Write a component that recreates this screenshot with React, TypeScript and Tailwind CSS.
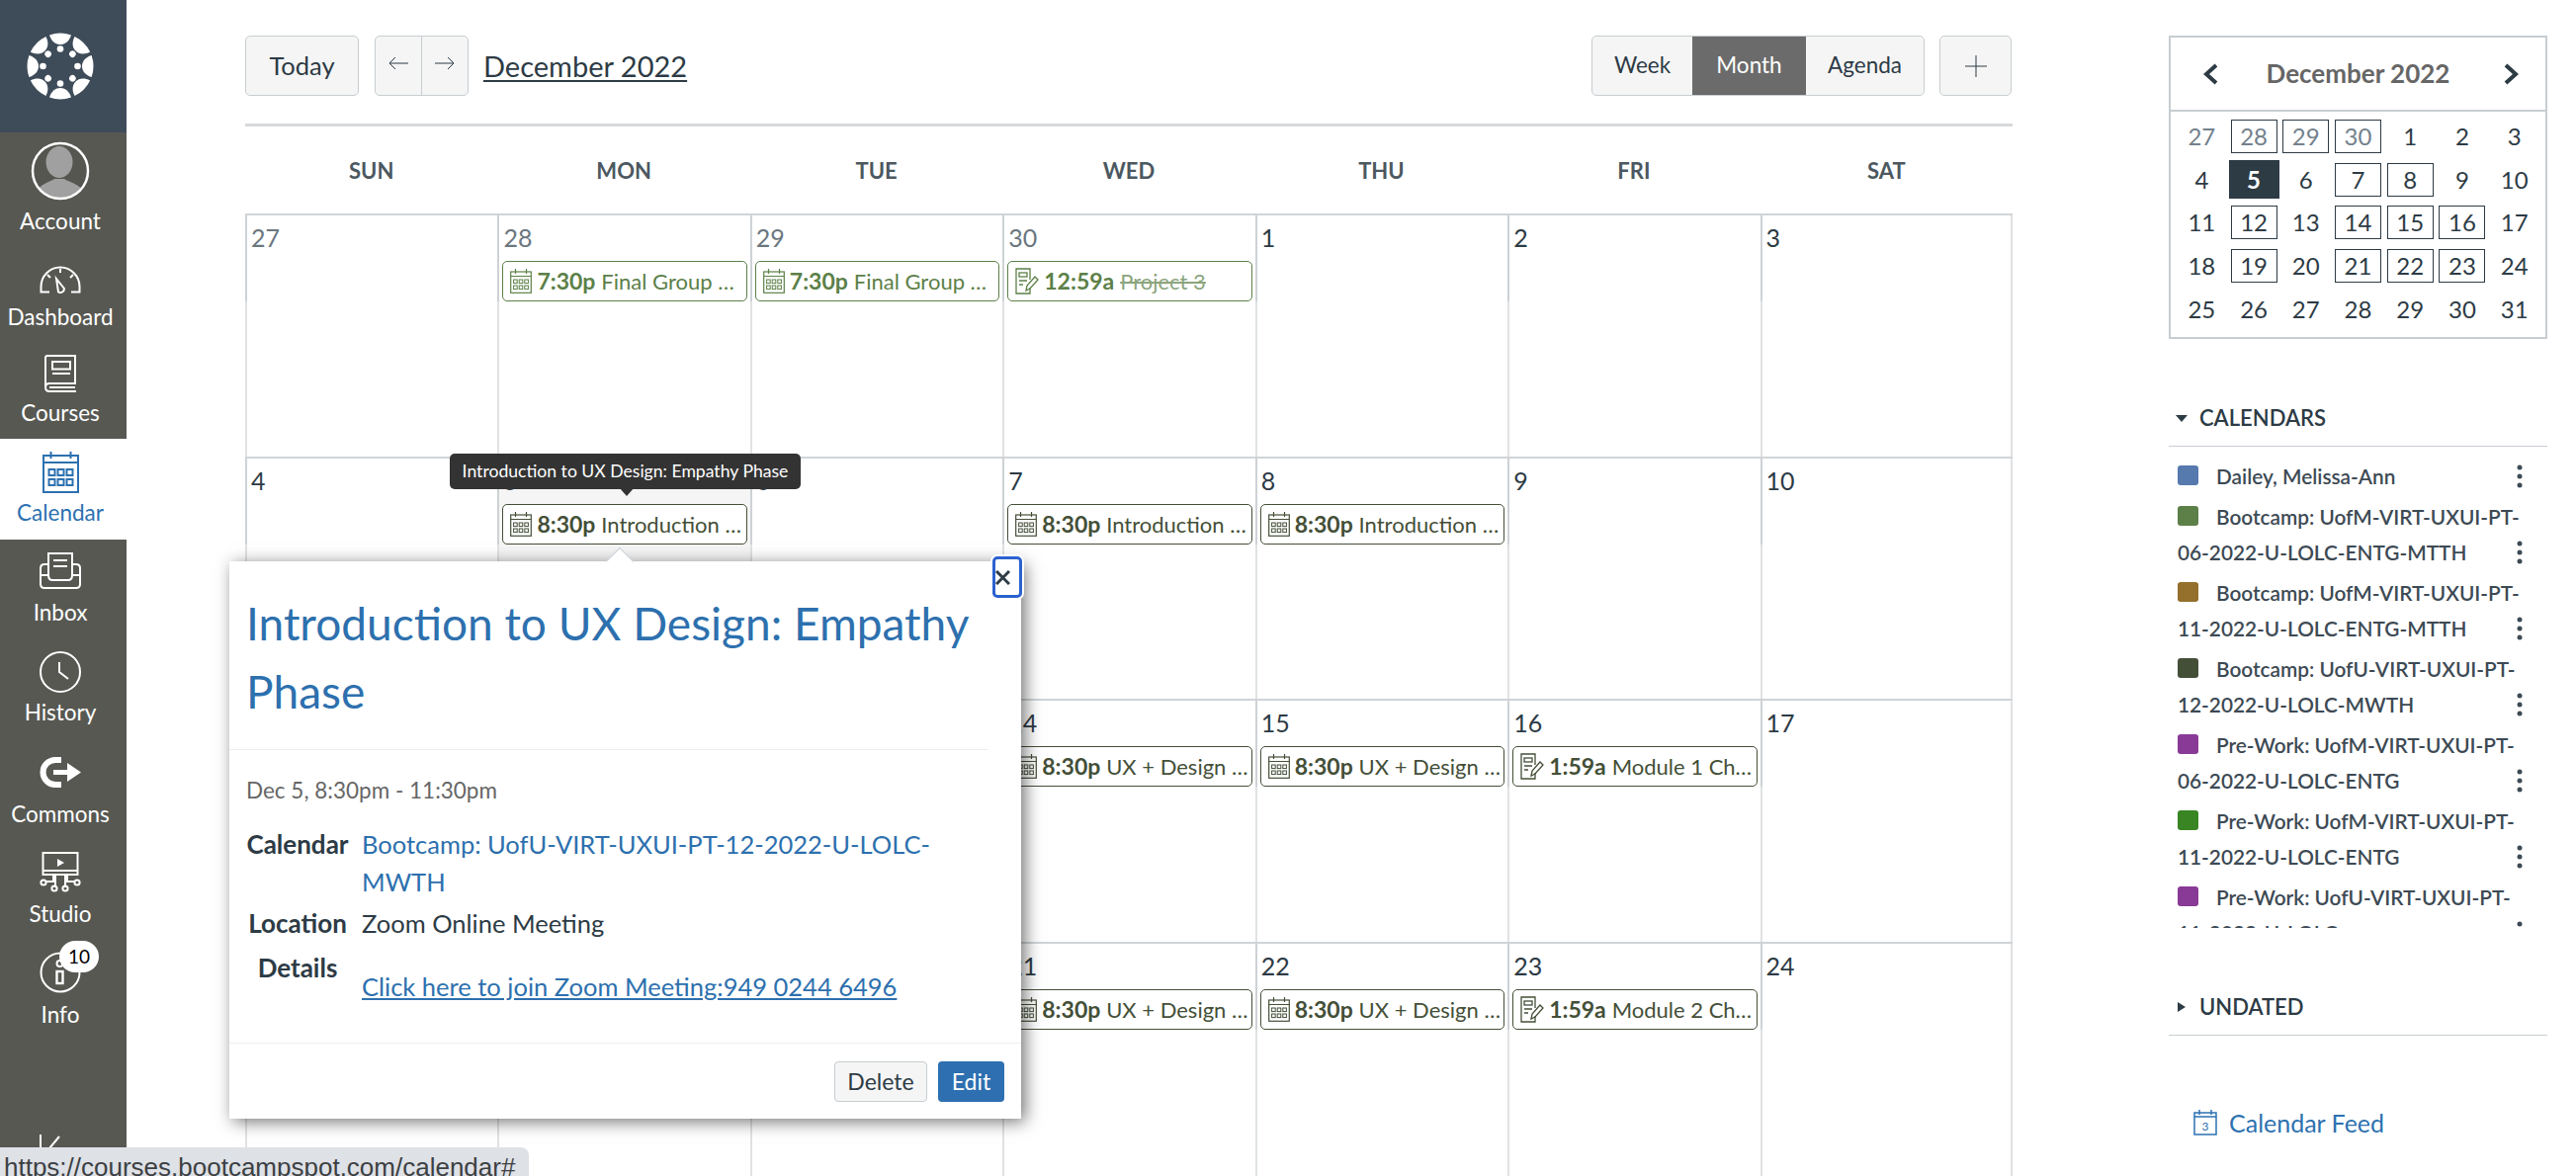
const items = [
  { label: 'Dashboard', h: 'h-[97px]', pb: 'pb-[13px]', mb: 'mb-[11px]', icon: <GaugeIcon /> },
  { label: 'Courses', h: 'h-[97px]', pb: 'pb-[13px]', mb: 'mb-[8px]', icon: <BookIcon /> },
  { label: 'Calendar', h: 'h-[102px]', pb: 'pb-[14px]', mb: 'mb-[7px]', icon: <CalendarNavIcon />, active: true },
  { label: 'Inbox', h: 'h-[101px]', pb: 'pb-[14px]', mb: 'mb-[11px]', icon: <InboxIcon /> },
  { label: 'History', h: 'h-[102px]', pb: 'pb-[15px]', mb: 'mb-[7px]', icon: <ClockIcon /> },
  { label: 'Commons', h: 'h-[102px]', pb: 'pb-[14px]', mb: 'mb-[14px]', icon: <CommonsIcon /> },
  { label: 'Studio', h: 'h-[101px]', pb: 'pb-[14px]', mb: 'mb-[9px]', icon: <StudioIcon /> },
  { label: 'Info', h: 'h-[102px]', pb: 'pb-[14px]', mb: 'mb-[9px]', icon: <InfoIcon /> },
];

type Ev = { time: string; title: string; tone: 'green' | 'dark'; kind?: 'cal' | 'task'; done?: boolean };

const finalGroup: Ev = { time: '7:30p', title: 'Final Group …', tone: 'green' };
const intro: Ev = { time: '8:30p', title: 'Introduction …', tone: 'dark' };
const uxDesign: Ev = { time: '8:30p', title: 'UX + Design …', tone: 'dark' };

const weeks: { day: number; muted?: boolean; today?: boolean; events?: Ev[] }[][] = [
  [
    { day: 27, muted: true },
    { day: 28, muted: true, events: [finalGroup] },
    { day: 29, muted: true, events: [finalGroup] },
    { day: 30, muted: true, events: [{ time: '12:59a', title: 'Project 3', tone: 'green', kind: 'task', done: true }] },
    { day: 1 },
    { day: 2 },
    { day: 3 },
  ],
  [
    { day: 4 },
    { day: 5, today: true, events: [intro] },
    { day: 6 },
    { day: 7, events: [intro] },
    { day: 8, events: [intro] },
    { day: 9 },
    { day: 10 },
  ],
  [
    { day: 11 },
    { day: 12 },
    { day: 13 },
    { day: 14, events: [uxDesign] },
    { day: 15, events: [uxDesign] },
    { day: 16, events: [{ time: '1:59a', title: 'Module 1 Ch…', tone: 'dark', kind: 'task' }] },
    { day: 17 },
  ],
  [
    { day: 18 },
    { day: 19 },
    { day: 20 },
    { day: 21, events: [uxDesign] },
    { day: 22, events: [uxDesign] },
    { day: 23, events: [{ time: '1:59a', title: 'Module 2 Ch…', tone: 'dark', kind: 'task' }] },
    { day: 24 },
  ],
];

const miniDays = [
  [27, 28, 29, 30, 1, 2, 3],
  [4, 5, 6, 7, 8, 9, 10],
  [11, 12, 13, 14, 15, 16, 17],
  [18, 19, 20, 21, 22, 23, 24],
  [25, 26, 27, 28, 29, 30, 31],
];
const boxed = ['0-1', '0-2', '0-3', '1-3', '1-4', '2-1', '2-3', '2-4', '2-5', '3-1', '3-3', '3-4', '3-5'];

const calendars = [
  { name: 'Dailey, Melissa-Ann', color: 'bg-[#5679ae]' },
  { name: 'Bootcamp: UofM-VIRT-UXUI-PT-06-2022-U-LOLC-ENTG-MTTH', color: 'bg-[#5c8048]' },
  { name: 'Bootcamp: UofM-VIRT-UXUI-PT-11-2022-U-LOLC-ENTG-MTTH', color: 'bg-[#94702c]' },
  { name: 'Bootcamp: UofU-VIRT-UXUI-PT-12-2022-U-LOLC-MWTH', color: 'bg-[#444f38]' },
  { name: 'Pre-Work: UofM-VIRT-UXUI-PT-06-2022-U-LOLC-ENTG', color: 'bg-[#893a96]' },
  { name: 'Pre-Work: UofM-VIRT-UXUI-PT-11-2022-U-LOLC-ENTG', color: 'bg-[#398524]' },
  { name: 'Pre-Work: UofU-VIRT-UXUI-PT-11-2022-U-LOLC', color: 'bg-[#893a96]' },
];

function CanvasLogo() {
  const angles = [0, 45, 90, 135, 180, 225, 270, 315];
  return (
    <svg width="70" height="70" viewBox="-35 -35 70 70" fill="white">
      {angles.map((a) => (
        <g key={a} transform={`rotate(${a})`}>
          <path d="M-11 -31.6 A33.5 33.5 0 0 1 11 -31.6 C9 -25 4.5 -22 0 -22 C-4.5 -22 -9 -25 -11 -31.6 Z" />
          <circle cx="0" cy="-17.5" r="3.3" />
        </g>
      ))}
    </svg>
  );
}

function AvatarIcon() {
  return (
    <svg width="60" height="60" viewBox="0 0 60 60" className="mb-[8px]">
      <defs>
        <clipPath id="avatar-clip">
          <circle cx="30" cy="30" r="27.5" />
        </clipPath>
      </defs>
      <circle cx="30" cy="30" r="28" fill="#55564f" />
      <g clipPath="url(#avatar-clip)" fill="#a0a0a0">
        <ellipse cx="29" cy="21" rx="13.5" ry="16" />
        <path d="M4 60 C4 44 18 42 24 38 H34 C40 42 56 44 56 60 Z" />
      </g>
      <circle cx="30" cy="30" r="28" fill="none" stroke="white" strokeWidth="2.5" />
    </svg>
  );
}

function GaugeIcon() {
  return (
    <svg width="42" height="28" viewBox="0 0 42 28" fill="none" stroke="currentColor" strokeWidth="2">
      <path d="M10 26.5 H1.5 V21 A19.5 19.5 0 0 1 40.5 21 V26.5 H32" />
      <path d="M21 3 V7 M8 9 L11 12 M34 9 L31 12" />
      <path d="M17 13 L25 23 A4 4 0 0 1 19 26.5 Z" />
    </svg>
  );
}

function BookIcon() {
  return (
    <svg width="33" height="38" viewBox="0 0 33 38" fill="none" stroke="currentColor" strokeWidth="2">
      <path d="M1 32 V3 Q1 1 3 1 H31 V29 H5 Q1 29 1 33 Q1 37 5 37 H32" />
      <path d="M5 33 H31" />
      <rect x="8" y="7" width="18" height="7.5" />
      <path d="M8 19 H26" />
    </svg>
  );
}

function CalendarNavIcon() {
  const cells = [
    [6.5, 18], [15.5, 18], [24.5, 18],
    [6.5, 28], [15.5, 28], [24.5, 28],
  ];
  return (
    <svg width="37" height="42" viewBox="0 0 37 42" fill="none" stroke="currentColor" strokeWidth="2">
      <rect x="1" y="4" width="35" height="37" />
      <path d="M1 11 H36 M8.5 0 V7 M28.5 0 V7" />
      {cells.map(([x, y]) => (
        <rect key={`${x}-${y}`} x={x} y={y} width="6" height="6" strokeWidth="2" />
      ))}
    </svg>
  );
}

function InboxIcon() {
  return (
    <svg width="42" height="37" viewBox="0 0 42 37" fill="none" stroke="currentColor" strokeWidth="2">
      <path d="M9 22 V1 H33 V22" />
      <path d="M14 8 H28 M14 14 H28" />
      <path d="M9 12 H5 Q1 12 1 16 V32 Q1 36 5 36 H37 Q41 36 41 32 V16 Q41 12 37 12 H33" />
      <path d="M1 23 H9 Q9 28 13 28 H29 Q33 28 33 23 H41" />
    </svg>
  );
}

function ClockIcon() {
  return (
    <svg width="42" height="42" viewBox="0 0 42 42" fill="none" stroke="currentColor" strokeWidth="2">
      <circle cx="21" cy="21" r="20" />
      <path d="M20 11 V21 L29 28" />
    </svg>
  );
}

function CommonsIcon() {
  return (
    <svg width="42" height="31" viewBox="0 0 42 31" fill="currentColor">
      <path d="M22 3 H16 A12.5 12.5 0 0 0 16 28 H22" fill="none" stroke="currentColor" strokeWidth="6" />
      <path d="M14 13 H28 V6 L42 15.5 L28 25 V18 H14 Z" />
    </svg>
  );
}

function StudioIcon() {
  return (
    <svg width="42" height="41" viewBox="0 0 42 41" fill="none" stroke="currentColor" strokeWidth="2">
      <rect x="3.5" y="1" width="35" height="22" />
      <path d="M3.5 19 H38.5" />
      <path d="M18 7 L25 11 L18 15 Z" fill="currentColor" stroke="none" />
      <path d="M14 23 V30 H7 M16 23 V36 M26 23 V36 M28 23 V30 H35" />
      <circle cx="4" cy="31" r="2.6" />
      <circle cx="15" cy="37" r="2.6" />
      <circle cx="26" cy="37" r="2.6" />
      <circle cx="38" cy="31" r="2.6" />
    </svg>
  );
}

function InfoIcon() {
  return (
    <svg width="42" height="42" viewBox="0 0 42 42" fill="none" stroke="currentColor" strokeWidth="2">
      <circle cx="21" cy="21" r="19.5" />
      <rect x="17.5" y="20" width="6" height="12" strokeWidth="2.4" />
      <circle cx="20.5" cy="12" r="3" />
    </svg>
  );
}

function EventCalIcon() {
  const cells = [
    [3.6, 11], [9.2, 11], [14.8, 11],
    [3.6, 17], [9.2, 17], [14.8, 17],
  ];
  return (
    <svg width="22" height="25" viewBox="0 0 22 25" fill="none" stroke="currentColor" strokeWidth="1.2" className="shrink-0">
      <rect x="0.7" y="3" width="20.6" height="21.3" />
      <path d="M0.7 7.5 H21.3 M5.5 0 V5 M16.5 0 V5" />
      {cells.map(([x, y]) => (
        <rect key={`${x}-${y}`} x={x} y={y} width="3.6" height="3.6" strokeWidth="1" />
      ))}
    </svg>
  );
}

function EventTaskIcon() {
  return (
    <svg width="24" height="27" viewBox="0 0 24 27" fill="none" stroke="currentColor" strokeWidth="1.3" className="shrink-0">
      <path d="M15 20 V26 H1 V1 H15 V12" />
      <rect x="4" y="5" width="8" height="4" />
      <path d="M4 13 H12 M4 17 H8" />
      <path d="M11 23 L12 18 L20 9 L23 12 L15 21 Z" />
    </svg>
  );
}

function EventChip({ ev }: { ev: Ev }) {
  const tone = ev.tone === 'green' ? 'border-[#5c8048] text-[#5c8048]' : 'border-[#444f38] text-[#444f38]';
  return (
    <div className={`mx-[3px] h-[41px] rounded-[5px] border bg-white pl-[7px] flex items-center gap-[5px] overflow-hidden whitespace-nowrap text-[23px] ${tone}`}>
      {ev.kind === 'task' ? <EventTaskIcon /> : <EventCalIcon />}
      <span>
        <span className="font-bold">{ev.time}</span>{' '}
        <span className={`text-[22px] ${ev.done ? 'line-through opacity-70' : ''}`}>{ev.title}</span>
      </span>
    </div>
  );
}

function SidePanelHeader({ open, label }: { open?: boolean; label: string }) {
  return (
    <div className="h-[52px] pb-[6px] pl-[7px] flex items-center border-b border-[#c7cdd1] text-[22px] font-semibold text-[#2d3b45]">
      <svg width="12" height="12" viewBox="0 0 12 12" fill="currentColor" className="mr-[12px]">
        {open ? <path d="M0 3 H12 L6 10 Z" /> : <path d="M2 1 V11 L10 6 Z" />}
      </svg>
      {label}
    </div>
  );
}

export default function App() {
  return (
    <div className="relative flex h-[1190px] w-[2606px] overflow-hidden bg-white font-[family-name:Lato,sans-serif] text-[#2d3b45]">
      {/* Global nav */}
      <nav className="w-[128px] shrink-0 bg-[#575852] text-white text-[22.5px] flex flex-col">
        <div className="h-[134px] shrink-0 bg-[#3e4b59] pr-[6px] flex items-center justify-center">
          <CanvasLogo />
        </div>
        <div className="h-[116px] shrink-0 pr-[6px] flex flex-col items-center justify-end pb-[13px] leading-[26px]">
          <AvatarIcon />
          <span>Account</span>
        </div>
        {items.map((it) => (
          <div
            key={it.label}
            className={`${it.h} ${it.pb} shrink-0 pr-[6px] flex flex-col items-center justify-end leading-[26px] ${it.active ? 'bg-white text-[#2d71b0]' : ''}`}
          >
            <div className={`relative ${it.mb}`}>
              {it.icon}
              {it.label === 'Info' && (
                <span className="absolute left-[20px] -top-[11px] h-[32px] w-[40px] rounded-full bg-white text-black text-[19px] flex items-center justify-center">
                  10
                </span>
              )}
            </div>
            <span>{it.label}</span>
          </div>
        ))}
        <div className="pt-[94px] pl-[40px]">
          <svg width="40" height="42" viewBox="0 0 40 42" fill="none" stroke="currentColor" strokeWidth="2">
            <path d="M1 0 V42 M20 2 L5 20 L20 38 M5 20 H40" />
          </svg>
        </div>
      </nav>

      {/* Calendar */}
      <main className="ml-[120px] w-[1788px] shrink-0">
        <div className="h-[125px] pt-[36px] flex items-start">
          <button className="h-[61px] w-[115px] rounded-[5px] border border-[#c7cdd1] bg-[#f5f5f5] text-[25.5px]">Today</button>
          <div className="ml-[16px] h-[61px] w-[95px] rounded-[5px] border border-[#c7cdd1] bg-[#f5f5f5] flex">
            <div className="flex-1 flex items-center justify-center pb-[6px] border-r border-[#c7cdd1]">
              <svg width="20" height="14" viewBox="0 0 20 14" fill="none" stroke="#2d3b45" strokeWidth="1"><path d="M20 7 H1 M7 1 L1 7 L7 13" /></svg>
            </div>
            <div className="flex-1 flex items-center justify-center pb-[6px]">
              <svg width="20" height="14" viewBox="0 0 20 14" fill="none" stroke="#2d3b45" strokeWidth="1"><path d="M0 7 H19 M13 1 L19 7 L13 13" /></svg>
            </div>
          </div>
          <a className="ml-[15px] h-[61px] flex items-center text-[29px] underline underline-offset-[3px]">December 2022</a>
          <div className="ml-auto h-[61px] w-[337px] rounded-[5px] border border-[#c7cdd1] bg-[#f5f5f5] flex text-[22.5px] overflow-hidden">
            <div className="w-[101px] flex items-center justify-center pb-[2px]">Week</div>
            <div className="w-[115px] bg-[#6b6b6b] text-white flex items-center justify-center pb-[2px]">Month</div>
            <div className="flex-1 flex items-center justify-center pb-[2px]">Agenda</div>
          </div>
          <div className="ml-[15px] mr-[1px] h-[61px] w-[73px] rounded-[5px] border border-[#c7cdd1] bg-[#f5f5f5] flex items-center justify-center">
            <svg width="22" height="22" viewBox="0 0 22 22" stroke="#2d3b45" strokeWidth="1"><path d="M11 0 V22 M0 11 H22" /></svg>
          </div>
        </div>
        <div className="h-[3px] bg-[#d7d9da]" />
        <div className="h-[88px] grid grid-cols-7 items-center text-center text-[22px] font-bold text-[#4c5860]">
          {['SUN', 'MON', 'TUE', 'WED', 'THU', 'FRI', 'SAT'].map((d) => (
            <div key={d}>{d}</div>
          ))}
        </div>
        {weeks.map((week, i) => (
          <div key={i} className="grid grid-cols-7 h-[245.5px] border-t-2 border-[#d0d4d7]">
            {week.map((cell, j) => (
              <div
                key={cell.day}
                className={`border-l-2 border-[#e0e2e3] ${j === 6 ? 'border-r-2' : ''} ${cell.today ? 'bg-[#f5f5f5]' : ''}`}
              >
                <div className="h-[87px] -ml-[2px] border-l-2 border-[#cdd2d5]">
                  <div className={`h-[46px] pl-[4px] flex items-center text-[25px] ${cell.muted ? 'text-[#6b7780]' : ''}`}>
                    {cell.day}
                  </div>
                  {cell.events?.map((ev, k) => <EventChip key={k} ev={ev} />)}
                </div>
              </div>
            ))}
          </div>
        ))}
      </main>

      {/* Right sidebar */}
      <aside className="ml-[158px] w-[383px] shrink-0 pt-[36px]">
        <div className="h-[307px] border-2 border-[#c7cdd1]">
          <div className="h-[75px] border-b-2 border-[#c7cdd1] flex items-center justify-between pl-[32px] pr-[26px]">
            <svg width="16" height="22" viewBox="0 0 16 22" fill="none" stroke="#2d3b45" strokeWidth="4"><path d="M14 2 L4 11 L14 20" /></svg>
            <span className="mr-[6px] text-[26px] font-bold text-[#666]">December 2022</span>
            <svg width="16" height="22" viewBox="0 0 16 22" fill="none" stroke="#2d3b45" strokeWidth="4"><path d="M2 2 L12 11 L2 20" /></svg>
          </div>
          <div className="px-[5px] pt-[3px] grid grid-cols-7 text-[24px]">
            {miniDays.map((row, r) =>
              row.map((d, c) => {
                const key = `${r}-${c}`;
                const isToday = key === '1-1';
                const isMuted = r === 0 && c < 4;
                return (
                  <div key={key} className="h-[43.7px] flex items-center justify-center">
                    <span
                      className={`flex items-center justify-center ${isToday ? 'h-[39px] w-[51px] bg-[#2d3b45] text-white font-bold' : 'h-[34px] w-[47px]'} ${boxed.includes(key) ? 'border-[1.5px] border-[#2d3b45]' : ''} ${isMuted ? 'text-[#73818c]' : ''}`}
                    >
                      {d}
                    </span>
                  </div>
                );
              }),
            )}
          </div>
        </div>

        <div className="mt-[57px]">
          <SidePanelHeader open label="CALENDARS" />
        </div>
        <div className="h-[487px] overflow-hidden pt-[12px] pl-[9px]">
          {calendars.map((cal) => (
            <div key={cal.name} className="relative mb-[5px] pr-[20px] text-[20.8px] leading-[36px] font-semibold text-[#3d4a54]">
              <span className={`inline-block h-[20px] w-[21px] rounded-[3px] mr-[18px] align-[-1px] ${cal.color}`} />
              {cal.name}
              <svg width="6" height="24" viewBox="0 0 6 24" fill="#3d4a54" className="absolute right-[25px] bottom-[6px]">
                <circle cx="3" cy="3" r="2.5" />
                <circle cx="3" cy="12" r="2.5" />
                <circle cx="3" cy="21" r="2.5" />
              </svg>
            </div>
          ))}
        </div>
        <div className="mt-[57px]">
          <SidePanelHeader label="UNDATED" />
        </div>
        <a className="mt-[73px] ml-[25px] flex items-center gap-[12px] text-[25px] leading-[30px] text-[#2d71b0]">
          <svg width="24" height="26" viewBox="0 0 24 26" fill="none" stroke="currentColor" strokeWidth="1.5">
            <rect x="1" y="3" width="22" height="22" />
            <path d="M1 7 H23 M6 0 V5 M18 0 V5" />
            <text x="12" y="21" textAnchor="middle" fontSize="12" stroke="none" fill="currentColor">3</text>
          </svg>
          Calendar Feed
        </a>
      </aside>

      {/* Tooltip over the event */}
      <div className="absolute left-[455px] top-[459px] h-[36px] w-[355px] rounded-[5px] bg-[#333] text-white text-[17.6px] flex items-center justify-center whitespace-nowrap">
        Introduction to UX Design: Empathy Phase
        <span className="absolute left-[171px] top-[34px] w-0 h-0 border-x-[8px] border-x-transparent border-t-[9px] border-t-[#333]" />
      </div>

      {/* Event popover */}
      <div className="absolute left-[232px] top-[568px] h-[564px] w-[801px] bg-white shadow-[4px_3px_16px_rgba(0,0,0,0.55)] flex flex-col">
        <span className="absolute left-[385px] -top-[10px] h-[20px] w-[20px] rotate-45 border-l border-t border-[#c7cdd1] bg-white" />
        <button className="absolute left-[772px] -top-[5px] h-[42px] w-[30px] rounded-[5px] border-[3px] border-[#2b62cf] bg-white shadow-[0_0_0_2px_white] flex items-center justify-start">
          <svg width="15" height="15" viewBox="0 0 15 15" fill="none" stroke="#2d3b45" strokeWidth="3"><path d="M1 1 L14 14 M14 1 L1 14" /></svg>
        </button>
        <div className="relative mr-[33px] border-b border-[#eceded] pl-[17px] pt-[28px] pb-[24px] text-[46px] leading-[69px] text-[#2d70ae]">
          Introduction to UX Design: Empathy Phase
        </div>
        <div className="flex-1 pl-[17px] pr-[30px] pt-[26px] text-[25.5px]">
          <div className="h-[30px] leading-[30px] text-[22.5px] text-[#666]">Dec 5, 8:30pm - 11:30pm</div>
          <div className="mt-[20px] grid grid-cols-[104px_1fr] gap-x-[13px] leading-[38px]">
            <div className="text-center font-bold text-[26px]">Calendar</div>
            <div className="text-[#2d70ae]">Bootcamp: UofU-VIRT-UXUI-PT-12-2022-U-LOLC-MWTH</div>
            <div className="mt-[4px] text-center font-bold text-[26px]">Location</div>
            <div className="mt-[4px]">Zoom Online Meeting</div>
            <div className="mt-[7px] text-center font-bold text-[26px]">Details</div>
            <div className="mt-[7px] pt-[19px]">
              <a className="text-[#2d70ae] underline">Click here to join Zoom Meeting:949 0244 6496</a>
            </div>
          </div>
        </div>
        <div className="h-[77px] border-t border-[#eceded] pt-[18px] pr-[17px] flex justify-end gap-[11px] text-[23px]">
          <button className="h-[41px] w-[94px] rounded-[4px] border border-[#c7cdd1] bg-[#f5f5f5]">Delete</button>
          <button className="h-[41px] w-[67px] rounded-[4px] bg-[#2d6fb0] text-white">Edit</button>
        </div>
      </div>

      {/* Browser link preview */}
      <div className="absolute left-0 top-[1161px] h-[40px] w-[535px] rounded-tr-[8px] bg-[#dee1e6] pl-[4px] font-[family-name:Liberation_Sans,sans-serif] text-[26px] leading-[40px] text-[#3c4043] whitespace-nowrap">
        https://courses.bootcampspot.com/calendar#
      </div>
    </div>
  );
}
